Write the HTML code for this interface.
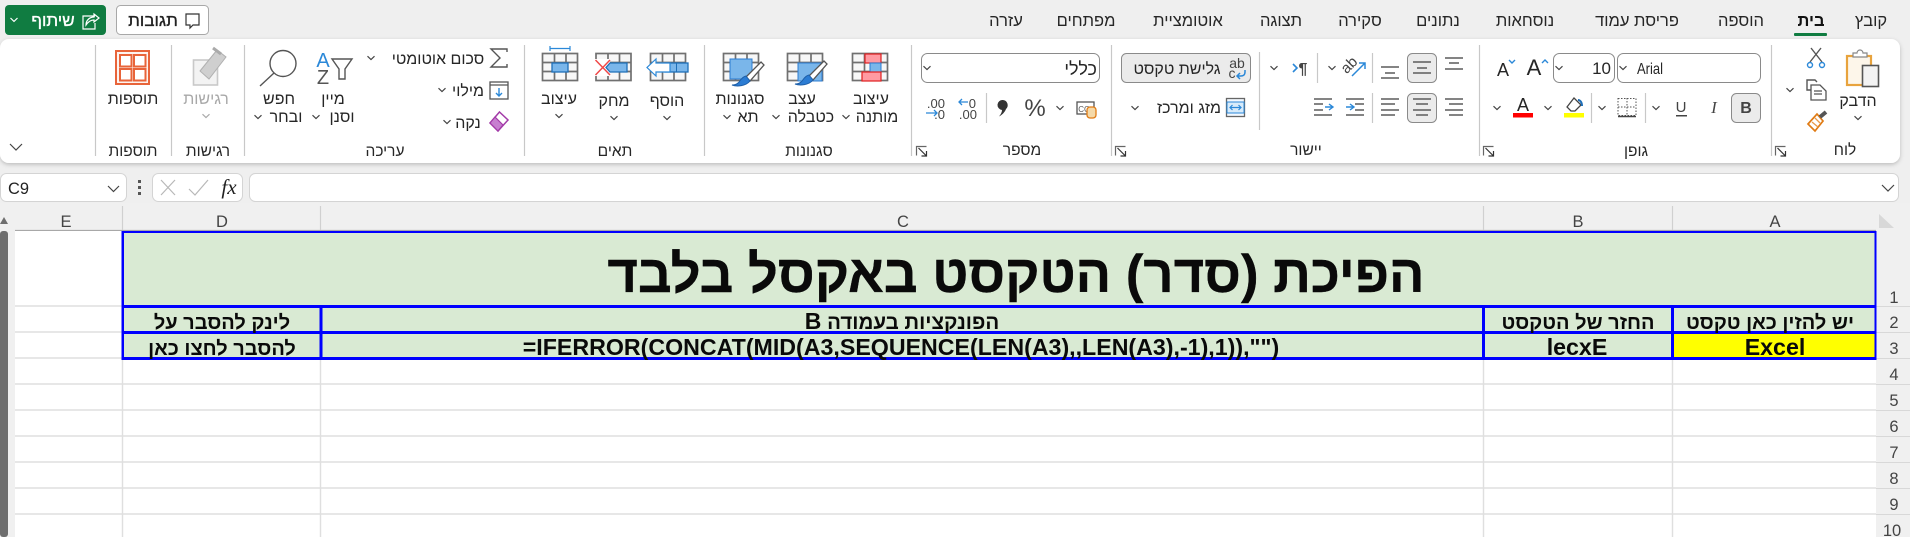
<!DOCTYPE html>
<html lang="he"><head><meta charset="utf-8"><title>Excel</title>
<style>
html,body{margin:0;padding:0;width:1910px;height:537px;overflow:hidden;background:#efefef}
svg{display:block}
text{font-family:"Liberation Sans","Noto Sans CJK JP",sans-serif;fill:#262626}
.he{direction:rtl;text-anchor:middle}
.t{font-size:16.5px}
.l{font-size:16px}
.g{font-size:15.5px}
.b{font-weight:bold;fill:#0a0a0a}
.h{font-size:16.5px;fill:#444;text-anchor:middle}
.c{font-size:20px;text-anchor:middle}
.x{font-size:23.2px;text-anchor:middle}
.ln{stroke:#555;stroke-width:1.4;fill:none}
.dv{stroke:#c8c8c8;stroke-width:1.2}
.gv{stroke:#d0d0d0;stroke-width:1.2}
.ch{fill:none;stroke:#444;stroke-width:1.2}
</style></head><body>
<svg width="1910" height="537" viewBox="0 0 1910 537" xmlns="http://www.w3.org/2000/svg">
<defs>
<filter id="sh" x="-2%" y="-10%" width="104%" height="125%"><feDropShadow dx="0" dy="1.5" stdDeviation="2" flood-color="#000" flood-opacity=".22"/></filter>
<path id="c" class="ch" d="M-3.5-1.8 0 1.6 3.5-1.8"/>
<g id="dl"><path d="M-5.5 4.5V-4.5H4.5" fill="none" stroke="#666" stroke-width="1.2"/><path d="M-3.5-3 4.5 5M4.5 0V5H-.5" fill="none" stroke="#333" stroke-width="1.2"/></g>
<g id="grid" fill="none" stroke="#707070" stroke-width="1.7"><rect x="0" y="0" width="35" height="27" fill="#f7f7f7"/><path d="M12 0V27M23.5 0V27M0 9H35M0 18H35"/></g>
<g id="brush"><path d="M0 0 3 3-11 19-15 15Z" fill="#fff" stroke="#555" stroke-width="1.3"/><path d="M-15 14C-20 15-21 20-23 21-25 23-27 23-29 23-24 25-15 24-11 19Z" fill="#2b7cd3" stroke="#1e5fa8"/></g>
</defs>

<!-- top bar -->
<rect width="1910" height="537" fill="#efefef"/>
<rect x="5" y="5" width="101" height="30" rx="4" fill="#107c41"/>
<path d="M10.500 18 14 21.400 17.500 18" fill="none" stroke="#fff" stroke-width="1.2"/>
<g fill="none" stroke="#fff" stroke-width="1.2"><path d="M95 16H83V29H95V23"/><path d="M86 25C86 20 90 17 94 17V14L99 18 94 22V20C91 20 88 22 86 25Z"/></g>
<text class="he" x="53" y="26" style="font-size:17px;fill:#fff;stroke:#fff;stroke-width:.35">שיתוף</text>
<rect x="116.500" y="5.500" width="92" height="29" rx="4" fill="#fff" stroke="#a8a8a8"/>
<path d="M186 14H199V25H193L190 28V25H186Z" fill="none" stroke="#333" stroke-width="1.2"/>
<text class="he" x="153" y="26" style="font-size:17px;fill:#222;stroke:#222;stroke-width:.35">תגובות</text>

<g class="t">
<text class="he" x="1871" y="26">קובץ</text>
<text class="he" x="1811" y="26" style="font-weight:bold;fill:#111">בית</text>
<text class="he" x="1741" y="26">הוספה</text>
<text class="he" x="1637" y="26">פריסת עמוד</text>
<text class="he" x="1525" y="26">נוסחאות</text>
<text class="he" x="1438" y="26">נתונים</text>
<text class="he" x="1360" y="26">סקירה</text>
<text class="he" x="1281" y="26">תצוגה</text>
<text class="he" x="1188" y="26">אוטומציית</text>
<text class="he" x="1086" y="26">מפתחים</text>
<text class="he" x="1006" y="26">עזרה</text>
</g>
<rect x="1794" y="33" width="33" height="3" rx="1" fill="#107c41"/>

<!-- ribbon -->
<rect x="0" y="39" width="1900" height="124" rx="9" fill="#fff" filter="url(#sh)"/>
<g class="dv">
<path d="M95.500 45V156M171.500 45V156M244.500 45V156M524.500 45V156M704.500 45V156M911.500 45V156M1111.500 45V156M1479.500 45V156M1771.500 45V156"/>
<path d="M1259.500 52V130M1372.500 53V83M1372.500 93V123M1317.500 53V83M1591.500 93V123M1645.500 93V123M986.500 93V123"/>
</g>
<g class="g">
<text class="he" x="133" y="156">תוספות</text>
<text class="he" x="208" y="156">רגישות</text>
<text class="he" x="385" y="156">עריכה</text>
<text class="he" x="615" y="156">תאים</text>
<text class="he" x="809" y="156">סגנונות</text>
<text class="he" x="1022" y="155">מספר</text>
<text class="he" x="1306" y="155">יישור</text>
<text class="he" x="1636" y="156">גופן</text>
<text class="he" x="1845" y="155">לוח</text>
</g>
<use href="#dl" transform="translate(922,151)"/><use href="#dl" transform="translate(1121,151)"/><use href="#dl" transform="translate(1489,151)"/><use href="#dl" transform="translate(1781,151)"/>
<path d="M10 144 16 150 22 144" fill="none" stroke="#444" stroke-width="1.2"/>

<!-- clipboard -->
<rect x="1847" y="56" width="24" height="29" fill="#fdf6ea" stroke="#e8a33d" stroke-width="2.2"/>
<path d="M1853 57V53H1857A3 3 0 0 1 1863 53H1867V57Z" fill="#fff" stroke="#888" stroke-width="1.2"/>
<rect x="1862.500" y="65.500" width="16" height="21" fill="#f3f3f3" stroke="#555" stroke-width="1.6"/>
<text class="he l" x="1858" y="106">הדבק</text><use href="#c" transform="translate(1858,118)"/>
<g fill="none" stroke-width="1.4"><path d="M1811 48 1822 62M1821 48 1810 62" stroke="#555"/><circle cx="1810" cy="65" r="2.5" stroke="#2b88d8"/><circle cx="1822" cy="65" r="2.5" stroke="#2b88d8"/></g>
<path d="M1814 90H1807V80H1815L1817 82" fill="none" stroke="#555" stroke-width="1.4"/><path d="M1811 85H1820L1826 91V100H1811ZM1814 91H1822M1814 94H1822" fill="#fff" stroke="#555" stroke-width="1.3"/>
<use href="#c" transform="translate(1790,90)"/>
<path d="M1808 124 1817 114 1823 121 1815 131Z" fill="#fff" stroke="#e07b14" stroke-width="1.7"/><path d="M1812 122 1818 127M1815 118 1820 123" stroke="#e89a4a" stroke-width="1.3"/><path d="M1820 117 1826 112" stroke="#555" stroke-width="4"/>

<!-- font -->
<rect x="1617.500" y="53.500" width="143" height="29" rx="6" fill="#fff" stroke="#8a8a8a"/>
<rect x="1553.500" y="53.500" width="61" height="29" rx="6" fill="#fff" stroke="#8a8a8a"/>
<use href="#c" transform="translate(1623,68)"/><use href="#c" transform="translate(1559,68)"/>
<text x="1637" y="74" textLength="26" lengthAdjust="spacingAndGlyphs" style="font-size:16px">Arial</text>
<text x="1611" y="74" text-anchor="end" style="font-size:17px">10</text>
<text x="1534" y="75" text-anchor="middle" style="font-size:22px">A</text><path d="M1542 63 1545 60 1548 63" fill="none" stroke="#2b88d8" stroke-width="1.4"/>
<text x="1503" y="76" text-anchor="middle" style="font-size:18px">A</text><path d="M1509 60 1512 63 1515 60" fill="none" stroke="#2b88d8" stroke-width="1.4"/>
<rect x="1731.500" y="93.500" width="29" height="29" rx="5" fill="#ebebeb" stroke="#8a8a8a"/>
<text x="1746" y="113" text-anchor="middle" style="font-size:16px;font-weight:bold;fill:#444">B</text>
<text x="1714" y="113" text-anchor="middle" style="font-size:17px;font-style:italic;font-family:'Liberation Serif',serif;fill:#444">I</text>
<text x="1681" y="112" text-anchor="middle" style="font-size:15px;fill:#444">U</text><rect x="1676" y="115" width="11" height="1.500" fill="#444"/>
<use href="#c" transform="translate(1656,108)"/>
<g stroke="#555" fill="none" stroke-dasharray="1.5 1.5"><rect x="1618" y="98.500" width="18" height="17"/><path d="M1627 98V116M1618 107H1636"/></g><path d="M1618 116.500H1636" stroke="#444" stroke-width="1.6"/>
<use href="#c" transform="translate(1602,108)"/>
<path d="M1567 107 1574 98 1581 105 1575 111H1571Z" fill="#fff" stroke="#444" stroke-width="1.3"/><path d="M1578 100C1580 100 1582 102 1582 106" fill="none" stroke="#1e6fb8" stroke-width="2"/>
<rect x="1564" y="113" width="20" height="4.500" fill="#ff0"/>
<use href="#c" transform="translate(1548,108)"/>
<text x="1523" y="111" text-anchor="middle" style="font-size:18px">A</text><rect x="1513" y="113" width="20" height="4.500" fill="#f00"/>
<use href="#c" transform="translate(1497,108)"/>

<!-- alignment -->
<rect x="1407.500" y="53.500" width="29" height="29" rx="5" fill="#ebebeb" stroke="#8a8a8a"/>
<rect x="1407.500" y="93.500" width="29" height="29" rx="5" fill="#ebebeb" stroke="#8a8a8a"/>
<g stroke="#5c5c5c" stroke-width="1.6" fill="none">
<path d="M1445 58H1463M1449 63H1459M1445 69H1463"/>
<path d="M1413 62H1431M1417 68H1427M1413 73H1431"/>
<path d="M1381 67H1399M1385 73H1395M1381 78H1399"/>
<path d="M1445 99H1463M1449 104H1463M1445 110H1463M1449 115H1463"/>
<path d="M1413 99H1431M1416 104H1428M1413 110H1431M1416 115H1428"/>
<path d="M1381 99H1399M1381 104H1395M1381 110H1399M1381 115H1395"/>
<path d="M1346 99H1364M1355 104H1364M1355 110H1364M1346 115H1364"/>
<path d="M1314 99H1332M1314 104H1323M1314 110H1323M1314 115H1332"/>
</g>
<path d="M1346 107H1353M1350 104 1354 107 1350 110" stroke="#2b88d8" stroke-width="1.4" fill="none"/>
<path d="M1325 107H1333M1329 104 1333 107 1329 110" stroke="#2b88d8" stroke-width="1.4" fill="none"/>
<text x="1349" y="70" text-anchor="middle" transform="rotate(-45 1349 65)" style="font-size:15px;fill:#444">ab</text>
<path d="M1352 76 1365 63M1359 63H1365V69" stroke="#2b88d8" stroke-width="1.5" fill="none"/>
<use href="#c" transform="translate(1332,68)"/>
<path d="M1293 64 1297 68 1293 72" stroke="#2b88d8" stroke-width="1.6" fill="none"/>
<text x="1303" y="74" text-anchor="middle" style="font-size:16px;font-weight:bold;fill:#444">¶</text>
<use href="#c" transform="translate(1274,68)"/>

<rect x="1121.500" y="53.500" width="129" height="29" rx="5" fill="#ebebeb" stroke="#8a8a8a"/>
<text class="he l" x="1177" y="74">גלישת טקסט</text>
<text x="1237" y="68" text-anchor="middle" style="font-size:14px;fill:#444">ab</text><text x="1232" y="78" text-anchor="middle" style="font-size:14px;fill:#444">c</text>
<path d="M1245 70V72C1245 75 1243 76 1241 76H1237M1240 73 1237 76 1240 79" stroke="#2b88d8" stroke-width="1.5" fill="none"/>
<rect x="1226.500" y="98.500" width="18" height="18" fill="#f4f9ff" stroke="#666" stroke-width="1.3"/><rect x="1227" y="102" width="17" height="11" fill="#d8ebfa" stroke="#2b88d8"/>
<path d="M1230 107.500H1241M1232.500 105 1230 107.500 1232.500 110M1238.500 105 1241 107.500 1238.500 110" stroke="#2b88d8" fill="none" stroke-width="1.2"/>
<text class="he l" x="1189" y="113">מזג ומרכז</text>
<use href="#c" transform="translate(1135,108)"/>

<!-- number -->
<rect x="921.500" y="53.500" width="178" height="29" rx="6" fill="#fff" stroke="#8a8a8a"/>
<text x="1097" y="75" style="direction:rtl;font-size:18px">כללי</text>
<use href="#c" transform="translate(927,68)"/>
<rect x="1077" y="102" width="17" height="12" fill="#fff" stroke="#555" stroke-width="1.3"/><text x="1084" y="112" text-anchor="middle" style="font-size:8px;fill:#555">CC</text>
<rect x="1087" y="107" width="9" height="11" rx="3" fill="#f5d9a8" stroke="#e07b14" stroke-width="1.3"/>
<use href="#c" transform="translate(1060,108)"/>
<text x="1035" y="116" text-anchor="middle" style="font-size:24px;fill:#444">%</text>
<path d="M1003 100A5.200 5.200 0 0 1 1006 109C1005 112 1002 115 999 116.500 1001 114 1002 112 1002 110A5 5 0 0 1 1003 100Z" fill="#333"/>
<text x="976" y="108" text-anchor="end" style="font-size:13px;fill:#444">0</text><text x="977" y="119" text-anchor="end" style="font-size:13px;fill:#444">.00</text>
<path d="M968 102H959M962 99 959 102 962 105" stroke="#2b88d8" stroke-width="1.3" fill="none"/>
<text x="945" y="108" text-anchor="end" style="font-size:13px;fill:#444">.00</text><text x="945" y="119" text-anchor="end" style="font-size:13px;fill:#444">.0</text>
<path d="M926 113H937M934 110 937 113 934 116" stroke="#2b88d8" stroke-width="1.3" fill="none"/>

<!-- styles -->
<use href="#grid" transform="translate(852.500,53.500)"/>
<rect x="865" y="54" width="16" height="9" fill="#ff9aa2" stroke="#e02020" stroke-width="1.200"/><rect x="870" y="63" width="11" height="9" fill="#7ab6ea" stroke="#2b7cd3"/><rect x="862" y="72" width="19" height="9" fill="#ff9aa2" stroke="#e02020" stroke-width="1.200"/>
<text class="he l" x="871" y="104">עיצוב</text><text class="he l" x="877" y="122">מותנה</text><use href="#c" transform="translate(846,117)"/>
<use href="#grid" transform="translate(787.500,53.500)"/>
<rect x="798" y="63" width="24" height="18" fill="#7ab6ea" stroke="#2b7cd3"/><use href="#brush" transform="translate(824,61)"/>
<text class="he l" x="802" y="104">עצב</text><text class="he l" x="811" y="122">כטבלה</text><use href="#c" transform="translate(776,117)"/>
<use href="#grid" transform="translate(723.500,53.500)"/>
<rect x="730" y="59" width="22" height="20" fill="#7ab6ea" stroke="#2b7cd3"/><use href="#brush" transform="translate(761,62)"/>
<text class="he l" x="740" y="104">סגנונות</text><text class="he l" x="748" y="122">תא</text><use href="#c" transform="translate(727,117)"/>

<!-- cells -->
<use href="#grid" transform="translate(650.500,53.500)"/><rect x="665" y="63" width="23" height="9" fill="#7ab6ea" stroke="#1e6fb8" stroke-width="1.3"/><path d="M676.500 63V72" stroke="#1e6fb8"/>
<path d="M670 63H656V59L647 67.500 656 76V72H670Z" fill="#fff" stroke="#2b88d8" stroke-width="1.2"/>
<text class="he l" x="667" y="106">הוסף</text><use href="#c" transform="translate(667,118)"/>
<use href="#grid" transform="translate(596,53.500)"/><rect x="594" y="59" width="16" height="17" fill="#fff"/><path d="M610 63H627V72H610L606 67.500Z" fill="#7ab6ea" stroke="#1e6fb8" stroke-width="1.3"/>
<path d="M595.500 60 610 75M610 60 595.500 75" stroke="#f04848" stroke-width="1.5"/>
<text class="he l" x="614" y="106">מחק</text><use href="#c" transform="translate(614,118)"/>
<use href="#grid" transform="translate(542.500,53.500)"/><rect x="552" y="63" width="16" height="9" fill="#7ab6ea" stroke="#1e6fb8" stroke-width="1.3"/>
<path d="M550 48.500H570M550 46V51M570 46V51" stroke="#2b88d8" stroke-width="1.2" fill="none"/>
<text class="he l" x="559" y="104">עיצוב</text><use href="#c" transform="translate(559,116)"/>

<!-- editing -->
<path d="M507 52V49H491L500 58 491 67H507V64" fill="none" stroke="#555" stroke-width="1.4"/>
<text class="he l" x="438" y="64">סכום אוטומטי</text><use href="#c" transform="translate(371,58)"/>
<rect x="490" y="82" width="18" height="17" fill="#fff" stroke="#555" stroke-width="1.3"/><path d="M490 85H508" stroke="#555" stroke-width="1.3"/><path d="M499 88V96M496 93 499 96 502 93" stroke="#2b88d8" stroke-width="1.4" fill="none"/>
<text class="he l" x="468" y="96">מילוי</text><use href="#c" transform="translate(442,90)"/>
<path d="M499.500 112 508 120 498 131 490 123Z" fill="#fff" stroke="#a33ba8" stroke-width="1.5"/><path d="M490 123 495 117 503 125 498 131Z" fill="#c77fd0" stroke="#a33ba8" stroke-width="1.2"/>
<text class="he l" x="468" y="128">נקה</text><use href="#c" transform="translate(447,122)"/>
<text x="323" y="67" text-anchor="middle" style="font-size:20px;fill:#2b88d8">A</text><text x="323" y="84" text-anchor="middle" style="font-size:20px;fill:#555">Z</text>
<path d="M332 59H352L345 69V79H339V69Z" fill="#fff" stroke="#555" stroke-width="1.4"/>
<text class="he l" x="333" y="104">מיין</text><text class="he l" x="342" y="122">וסנן</text><use href="#c" transform="translate(316,117)"/>
<circle cx="283" cy="63.500" r="13" fill="#fff" stroke="#555" stroke-width="1.4"/><path d="M274 73 260 86" stroke="#555" stroke-width="1.4"/>
<text class="he l" x="279" y="104">חפש</text><text class="he l" x="286" y="122">ובחר</text><use href="#c" transform="translate(258,117)"/>
<rect x="193.500" y="60" width="24" height="25" fill="#f3f3f3" stroke="#c9c9c9" stroke-width="1.6"/>
<path d="M200 71 217 50 226 57 209 79Z" fill="#cfcfcf" stroke="#b0b0b0"/><path d="M213 48 221 54" stroke="#aaa" stroke-width="3"/>
<text class="he l" x="206" y="104" style="fill:#a8a8a8">רגישות</text>
<path d="M202.500 114.200 206 117.600 209.500 114.200" fill="none" stroke="#aaa" stroke-width="1.2"/>
<g fill="none" stroke="#e8643a" stroke-width="2"><rect x="116" y="51" width="33" height="33" fill="#fdf3ef"/><rect x="120" y="55" width="11.500" height="11.500" fill="#fff"/><rect x="134" y="55" width="11.500" height="11.500" fill="#fff"/><rect x="120" y="69" width="11.500" height="11.500" fill="#fff"/><rect x="134" y="69" width="11.500" height="11.500" fill="#fff"/></g>
<text class="he l" x="133" y="104">תוספות</text>

<!-- formula bar -->
<rect x=".5" y="173.500" width="126" height="28" rx="6" fill="#fff" stroke="#d4d4d4"/>
<text x="8" y="194" textLength="21" lengthAdjust="spacingAndGlyphs" style="font-size:17px;fill:#222">C9</text>
<path d="M108 186 113.500 191.500 119 186" fill="none" stroke="#444" stroke-width="1.2"/>
<g fill="#555"><rect x="138" y="180" width="3" height="3"/><rect x="138" y="186" width="3" height="3"/><rect x="138" y="192" width="3" height="3"/></g>
<rect x="152.500" y="173.500" width="90" height="28" rx="6" fill="#fff" stroke="#d4d4d4"/>
<path d="M161 180 175 195M175 180 161 195" stroke="#b8b8b8" stroke-width="1.2"/>
<path d="M189 189 195 195 208 180" fill="none" stroke="#b8b8b8" stroke-width="1.2"/>
<text x="229" y="194" text-anchor="middle" style="font-size:21px;font-style:italic;font-family:'Liberation Serif',serif;fill:#222">fx</text>
<rect x="249.500" y="173.500" width="1649" height="28" rx="6" fill="#fff" stroke="#d4d4d4"/>
<path d="M1882 185 1888 191 1894 185" fill="none" stroke="#444" stroke-width="1.2"/>

<!-- headers -->
<rect x="0" y="203" width="1910" height="28" fill="#f0f0f0"/>
<path d="M15 230.500H1876" stroke="#a8a8a8" stroke-width="1.2"/>
<g class="gv"><path d="M122.500 206V230M320.500 206V230M1483.500 206V230M1672.500 206V230"/></g>
<g><text class="h" x="66" y="227">E</text><text class="h" x="222" y="227">D</text><text class="h" x="903" y="227">C</text><text class="h" x="1578" y="227">B</text><text class="h" x="1775" y="227">A</text></g>
<path d="M1879 214V228H1894Z" fill="#d8d8d8"/>
<rect x="0" y="231" width="15" height="306" fill="#f0f0f0"/>
<rect x="0" y="231" width="8" height="306" rx="3" fill="#6e6e6e"/>
<path d="M0 224 4 217 8 224Z" fill="#6e6e6e"/>

<!-- grid -->
<rect x="15" y="231" width="1861" height="306" fill="#fff"/>
<g stroke="#dfdfdf" stroke-width="1.400"><path d="M15 306H122M15 332H122M15 358H122M15 384H1876M15 410H1876M15 436H1876M15 462H1876M15 488H1876M15 514H1876"/>
<path d="M122.500 358V537M320.500 358V537M1483.500 358V537M1672.500 358V537"/></g>

<!-- row headers -->
<rect x="1876" y="231" width="34" height="306" fill="#f0f0f0"/>
<g stroke="#d8d8d8"><path d="M1876 306.500H1910M1876 332.500H1910M1876 358.500H1910M1876 384.500H1910M1876 410.500H1910M1876 436.500H1910M1876 462.500H1910M1876 488.500H1910M1876 514.500H1910"/></g>
<g><text class="h" x="1894" y="303">1</text><text class="h" x="1894" y="328">2</text><text class="h" x="1894" y="354">3</text><text class="h" x="1894" y="380">4</text><text class="h" x="1894" y="406">5</text><text class="h" x="1894" y="432">6</text><text class="h" x="1894" y="458">7</text><text class="h" x="1894" y="484">8</text><text class="h" x="1894" y="510">9</text><text class="h" x="1892" y="536">10</text></g>

<!-- table -->
<rect x="122" y="232" width="1754" height="127" fill="#d9ead3"/>
<rect x="1673" y="334" width="203" height="24" fill="#ff0"/>
<g fill="#0000ff">
<rect x="122" y="231" width="1754" height="2"/>
<rect x="122" y="305" width="1754" height="3"/>
<rect x="122" y="331" width="1754" height="3"/>
<rect x="122" y="357" width="1754" height="3"/>
<rect x="121.500" y="231" width="2.500" height="129"/>
<rect x="1874.500" y="231" width="2" height="129"/>
<rect x="319.500" y="305" width="3" height="55"/>
<rect x="1482" y="305" width="3" height="55"/>
<rect x="1671" y="305" width="3" height="55"/>
</g>
<text class="he b" x="1016" y="292" style="font-size:52.600px;stroke:#0a0a0a;stroke-width:.4">הפיכת (סדר) הטקסט באקסל בלבד</text>
<g class="b">
<text class="he c b" x="1770" y="329">יש להזין כאן טקסט</text>
<text class="he c b" x="1578" y="329">החזר של הטקסט</text>
<text class="he c b" x="902" y="329" style="font-size:20.500px">הפונקציות בעמודה <tspan style="font-size:23px">B</tspan></text>
<text class="he c b" x="222" y="329">לינק להסבר על</text>
<text class="x b" x="1775" y="355">Excel</text>
<text class="x b" x="1577" y="355">lecxE</text>
<text class="x b" x="901" y="355" direction="ltr">=IFERROR(CONCAT(MID(A3,SEQUENCE(LEN(A3),,LEN(A3),-1),1)),"")</text>
<text class="he c b" x="222" y="355">להסבר לחצו כאן</text>
</g>
</svg>
</body></html>
